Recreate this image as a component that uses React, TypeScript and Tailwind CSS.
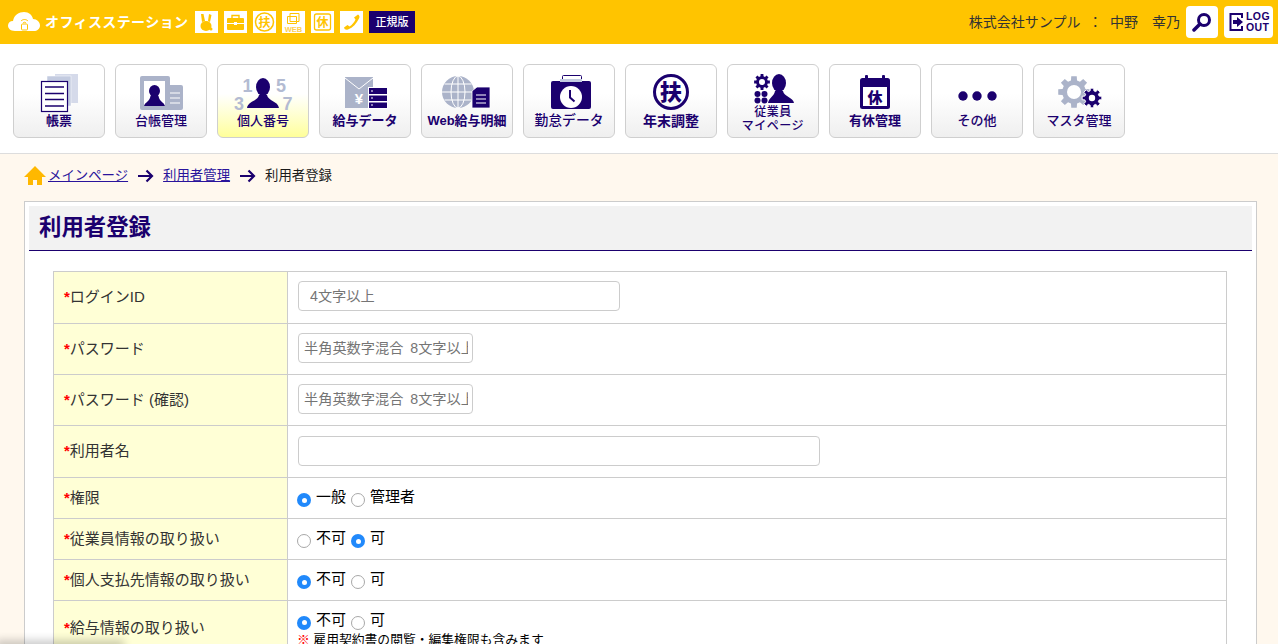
import type { ReactNode } from 'react';

const NAVY = '#1b006e';
const GREY = '#abb3c9';
const YELLOW = '#ffc400';

// 歯車: 歯の数から輪郭を作る
function gearPath(cx: number, cy: number, r: number, teeth: number) {
  const inner = r * 0.74;
  const step = (Math.PI * 2) / teeth;
  const pts: string[] = [];
  for (let i = 0; i < teeth; i++) {
    const a = i * step;
    const w = step * 0.22;
    const add = (rad: number, ang: number) =>
      pts.push(`${(cx + rad * Math.cos(ang)).toFixed(2)} ${(cy + rad * Math.sin(ang)).toFixed(2)}`);
    add(inner, a - w * 1.5);
    add(r, a - w);
    add(r, a + w);
    add(inner, a + w * 1.5);
  }
  return `M${pts.join('L')}Z`;
}

function Person({ cx, cy, rx, ry, left, right, bottom }: { cx: number; cy: number; rx: number; ry: number; left: number; right: number; bottom: number }) {
  const neck = cy + ry - 1;
  return (
    <g fill={NAVY}>
      <ellipse cx={cx} cy={cy} rx={rx} ry={ry} />
      <path d={`M${left} ${bottom}C${left + 1} ${neck + 6} ${cx - 5} ${neck + 6} ${cx - 4} ${neck}L${cx + 4} ${neck}C${cx + 5} ${neck + 6} ${right - 1} ${neck + 6} ${right} ${bottom}Z`} />
    </g>
  );
}

/* ヘッダーの小アイコン */
const quick: ReactNode[] = [
  <>
    <ellipse cx="11" cy="15" rx="5.5" ry="5" fill={YELLOW} />
    <path d="M7 11L6 3l2.5 0L10 10ZM13 10l1-7 2.5 1L15 11Z" fill={YELLOW} />
    <circle cx="16" cy="18" r="1.5" fill={YELLOW} />
  </>,
  <>
    <rect x="3" y="7" width="17" height="12" rx="1" fill={YELLOW} />
    <path d="M8 7V4.5h7V7" fill="none" stroke={YELLOW} strokeWidth="1.4" />
    <path d="M3 12.5h17" stroke="#fff" strokeWidth="1" />
    <rect x="10" y="11" width="3" height="3" fill="#fff" />
  </>,
  <>
    <circle cx="11.5" cy="11" r="9" fill="none" stroke={YELLOW} strokeWidth="1.5" />
    <text x="11.5" y="15.5" textAnchor="middle" fontSize="12" fontWeight="700" fill={YELLOW}>扶</text>
  </>,
  <>
    <path d="M8 2.500h9v8H8ZM5.500 5.500h9v7h-9Z" fill="#fff" stroke={YELLOW} strokeWidth="1" />
    <text x="11.5" y="21" textAnchor="middle" fontSize="7.5" fontWeight="700" fill="#ffd04d">WEB</text>
  </>,
  <>
    <rect x="3.5" y="3" width="16" height="16" rx="2" fill="none" stroke={YELLOW} strokeWidth="1.3" />
    <text x="11.5" y="15.5" textAnchor="middle" fontSize="12" fontWeight="700" fill={YELLOW}>休</text>
  </>,
  <path d="M18 3.5c1.5 1 2 2 1 4-2.5 5-6 9-11 11-2 .7-3.500 0-4-2l3.500-2.500 2 1.500c2.500-1.500 4.500-4 6-7l-1.500-2Z" fill={YELLOW} />,
];

/* 上段メニュー: 座標はタイル内側の左上基準 */
const tiles: { label: ReactNode; cls: string; active?: boolean; icon: ReactNode }[] = [
  {
    label: '帳票',
    cls: 'text-[13px] font-bold',
    icon: (
      <>
        <rect x="41" y="9" width="23" height="29" fill="#d5daea" />
        <rect x="33" y="11" width="24" height="30" fill="#c3cbe0" stroke="#fff" strokeWidth="0.5" />
        <rect x="27.500" y="16.500" width="26" height="30" fill="#fff" stroke={NAVY} strokeWidth="1.200" />
        <path d="M31 22h19M31 28.500h19M31 34.500h19M31 41h19" stroke={NAVY} strokeWidth="1.700" />
      </>
    ),
  },
  {
    label: '台帳管理',
    cls: 'text-[13px] font-medium',
    icon: (
      <>
        <rect x="50" y="20" width="17" height="25" rx="2" fill={GREY} />
        <path d="M54 28h10M54 33h10M54 38h10" stroke="#fff" strokeWidth="1" />
        <rect x="24" y="11" width="30" height="34" rx="2" fill={GREY} />
        <rect x="28" y="16" width="21" height="25" fill="#fff" />
        <Person cx={38.500} cy={26} rx={5.500} ry={6} left={28} right={49} bottom={41} />
      </>
    ),
  },
  {
    label: '個人番号',
    cls: 'text-[13px] font-medium',
    active: true,
    icon: (
      <>
        <g fontSize="18" fontWeight="700" fill="#b3bbd2" textAnchor="middle">
          <text x="29.500" y="27">1</text>
          <text x="63" y="27">5</text>
          <text x="21" y="45">3</text>
          <text x="69.500" y="45">7</text>
        </g>
        <Person cx={45} cy={22} rx={7} ry={9} left={29} right={61} bottom={43} />
      </>
    ),
  },
  {
    label: '給与データ',
    cls: 'text-[13px] font-bold',
    icon: (
      <>
        <rect x="25" y="12" width="28" height="31" fill={GREY} />
        <path d="M25 13l14 11 14-11" fill="none" stroke="#fff" strokeWidth="1" />
        <text x="39" y="39" textAnchor="middle" fontSize="15" fontWeight="700" fill="#fff">¥</text>
        <g fill={NAVY} stroke="#fff" strokeWidth="1">
          <rect x="48.500" y="22.500" width="19" height="7" />
          <rect x="48.500" y="30" width="19" height="6.500" />
          <rect x="48.500" y="37" width="19" height="6.500" />
        </g>
        <path d="M51 26h2M51 33h2M51 40h2" stroke="#fff" strokeWidth="1.200" />
      </>
    ),
  },
  {
    label: 'Web給与明細',
    cls: 'text-[13px] font-bold',
    icon: (
      <>
        <circle cx="36" cy="27" r="16" fill={GREY} />
        <g fill="none" stroke="#fff" strokeWidth="1">
          <ellipse cx="36" cy="27" rx="7" ry="16" />
          <path d="M36 11v32M20 27h32M22.500 19h27M22.500 35h27" />
        </g>
        <path d="M50 26l5-4h13v21H50Z" fill={NAVY} stroke="#fff" strokeWidth="0.800" />
        <path d="M54 30h10M54 34h10M54 38h10" stroke="#fff" strokeWidth="1.200" />
      </>
    ),
  },
  {
    label: '勤怠データ',
    cls: 'text-[13.800px] font-medium',
    icon: (
      <>
        <rect x="38.500" y="10.500" width="19" height="10" rx="1" fill="#fff" stroke={NAVY} />
        <rect x="27" y="16" width="40" height="28" rx="2" fill={NAVY} />
        <rect x="36" y="14" width="22" height="3" fill="#c3cbe0" />
        <circle cx="47" cy="32" r="11" fill="#fff" />
        <path d="M46 25v7.500l4.500 4" fill="none" stroke={NAVY} strokeWidth="2" />
      </>
    ),
  },
  {
    label: '年末調整',
    cls: 'text-[14px] font-bold',
    icon: (
      <>
        <circle cx="45" cy="27" r="16.500" fill="none" stroke={NAVY} strokeWidth="3" />
        <text x="45" y="35" textAnchor="middle" fontSize="22" fontWeight="900" fill={NAVY}>扶</text>
      </>
    ),
  },
  {
    label: (
      <span className="block -mt-[8px] text-[12px] leading-[14px] tracking-[0.5px]">
        従業員
        <br />
        マイページ
      </span>
    ),
    cls: 'font-medium',
    icon: (
      <>
        <path d={gearPath(34, 17, 8, 8)} fill={NAVY} />
        <circle cx="34" cy="17" r="3" fill="#fff" />
        <g fill={NAVY}>
          <circle cx="29.500" cy="29" r="3" />
          <circle cx="36.500" cy="29" r="3" />
          <circle cx="29.500" cy="35.500" r="3" />
          <circle cx="36.500" cy="35.500" r="3" />
        </g>
        <Person cx={51} cy={18} rx={7} ry={9} left={40} right={66} bottom={38} />
      </>
    ),
  },
  {
    label: '有休管理',
    cls: 'text-[13px] font-bold',
    icon: (
      <>
        <rect x="30" y="13" width="30" height="31" rx="2.500" fill={NAVY} />
        <rect x="33" y="22" width="24" height="19" fill="#fff" />
        <rect x="35" y="10" width="3" height="5" rx="1" fill={NAVY} />
        <rect x="52" y="10" width="3" height="5" rx="1" fill={NAVY} />
        <text x="45" y="38" textAnchor="middle" fontSize="15" fontWeight="900" fill={NAVY}>休</text>
      </>
    ),
  },
  {
    label: 'その他',
    cls: 'text-[13px] font-medium',
    icon: (
      <g fill={NAVY}>
        <circle cx="31" cy="31" r="4.700" />
        <circle cx="45" cy="31" r="4.700" />
        <circle cx="60" cy="31" r="4.700" />
      </g>
    ),
  },
  {
    label: 'マスタ管理',
    cls: 'text-[13px] font-medium',
    icon: (
      <>
        <path d={gearPath(40, 27, 16, 8)} fill={GREY} />
        <circle cx="40" cy="27" r="7" fill="#fff" />
        <path d={gearPath(58, 33, 10, 8)} fill={NAVY} stroke="#fff" strokeWidth="1" />
        <circle cx="58" cy="33" r="3.200" fill="#fff" />
      </>
    ),
  },
];

function Tile({ label, cls, active, icon }: (typeof tiles)[number]) {
  return (
    <div
      className={`w-[92px] h-[74px] rounded-md border border-[#cfcfcf] text-[#1b006e] text-center ${
        active ? 'bg-gradient-to-b from-white from-40% to-[#ffff99]' : 'bg-gradient-to-b from-white from-40% to-[#efefef]'
      }`}
    >
      <svg width="90" height="48" viewBox="0 0 90 48" className="block">
        {icon}
      </svg>
      <div className={`leading-[16px] ${cls}`}>{label}</div>
    </div>
  );
}

function Radio({ on }: { on?: boolean }) {
  return (
    <span
      className={`inline-flex items-center justify-center w-[14px] h-[14px] rounded-full relative top-[6px] ${
        on ? 'bg-[#2189fb]' : 'bg-white border border-[#a8a8a8]'
      }`}
    >
      {on && <span className="w-[5px] h-[5px] rounded-full bg-white" />}
    </span>
  );
}

function Radios({ items }: { items: [string, boolean][] }) {
  return (
    <div className="flex gap-[5px] -ml-[1px] -mt-[2px] text-[15px] leading-[20px] text-black">
      {items.map(([t, on]) => (
        <label key={t} className="flex gap-[5px]">
          <Radio on={on} />
          <span>{t}</span>
        </label>
      ))}
    </div>
  );
}

function Row({ label, h, children }: { label: string; h: string; children: ReactNode }) {
  return (
    <tr className={h}>
      <th className="bg-[#ffffd6] border border-[#cccccc] pl-[10px] text-left font-normal text-[15px] text-[#333]">
        <span className="text-[#f00] font-bold">*</span>
        {label}
      </th>
      <td className="border border-[#cccccc] pl-[10px] align-middle">{children}</td>
    </tr>
  );
}

const inputCls = 'block h-[30px] border border-[#cccccc] rounded-[4px] text-[14.200px] [word-spacing:3px] bg-white outline-none placeholder:text-[#757575]';

export default function App() {
  return (
    <div className="relative h-[644px] overflow-hidden bg-[#fff8ee] text-[#333] font-['Liberation_Sans','Noto_Sans_CJK_JP',sans-serif]">
      {/* ヘッダー */}
      <header className="h-[44px] bg-[#ffc400] flex items-center justify-between pl-[8px] pr-[5px]">
        <div className="flex items-center">
          <svg width="33" height="22" viewBox="0 0 33 22" className="mr-[4px]">
            <path d="M7 20C2 20 0 17 0 14.500 0 12 2 10 5 10 6 4 11 1 16 1c5 0 8 3 9 7 4 0 7 3 7 6.500C32 18 29 20 26 20Z" fill="#fff" />
            <path d="M13 10c2-2 5-2 7 0M15 12c1-1 2-1 3 0" fill="none" stroke={YELLOW} strokeWidth="1" />
            <rect x="13.500" y="13" width="6" height="6" rx="1" fill="none" stroke={YELLOW} strokeWidth="1" />
          </svg>
          <span className="w-[147px] text-white font-bold text-[14px] tracking-[0.4px] whitespace-nowrap">オフィスステーション</span>
          <div className="flex gap-[6px] ml-[3px]">
            {quick.map((q, i) => (
              <svg key={i} width="23" height="22" viewBox="0 0 23 22" className="bg-white block">
                {q}
              </svg>
            ))}
          </div>
          <span className="ml-[6px] w-[46px] h-[22px] flex items-center justify-center bg-[#1b006e] text-white text-[11px] font-medium">正規版</span>
        </div>
        <div className="flex items-center">
          <span className="text-[14px] text-[#333] mr-[6px] whitespace-pre">株式会社サンプル  ：  中野　幸乃</span>
          <div className="w-[32px] h-[32px] bg-white rounded-[4px] flex items-center justify-center">
            <svg width="20" height="20" viewBox="0 0 20 20" fill="none" stroke={NAVY}>
              <circle cx="12" cy="8" r="5.500" strokeWidth="3" />
              <path d="M8 12l-6 6" strokeWidth="3.500" strokeLinecap="round" />
            </svg>
          </div>
          <div className="ml-[6px] w-[49px] h-[32px] bg-white rounded-[4px] flex items-center pl-[5px] gap-[2px]">
            <svg width="15" height="20" viewBox="0 0 15 20" fill="none">
              <path d="M13 6V2H1.500v16H13v-4" stroke={NAVY} strokeWidth="2" />
              <path d="M4 8h4V5l6 5-6 5v-3H4Z" fill={NAVY} />
            </svg>
            <span className="text-[10.500px] leading-[11px] font-bold text-[#1b006e] tracking-[0.4px]">
              LOG
              <br />
              OUT
            </span>
          </div>
        </div>
      </header>

      {/* 上段メニュー */}
      <nav className="h-[110px] bg-white border-b border-[#dddddd] pt-[20px] pl-[13px] flex gap-[10px]">
        {tiles.map((t, i) => (
          <Tile key={i} {...t} />
        ))}
      </nav>

      {/* パンくず */}
      <div className="h-[47px] pl-[24px] pb-[3px] flex items-center text-[13.400px]">
        <svg width="22" height="19" viewBox="0 0 22 19" className="mr-[2px] mb-[2px]">
          <path d="M11 0L22 11H18V19H13V14H9V19H4V11H0Z" fill="#ffb800" />
        </svg>
        <a className="text-[#2a149c] underline">メインページ</a>
        <Arrow />
        <a className="text-[#2a149c] underline">利用者管理</a>
        <Arrow />
        <span className="text-[#1a1a1a]">利用者登録</span>
      </div>

      {/* 本体 */}
      <main className="ml-[24px] w-[1233px] bg-white border border-[#cccccc] p-[4px]">
        <h1 className="h-[45px] bg-[#f2f2f2] border-b border-[#1b006e] pl-[10px] flex items-center text-[22.400px] font-bold text-[#1b006e]">利用者登録</h1>
        <table className="mt-[20px] ml-[24px] w-[1174px] table-fixed border-collapse">
          <colgroup>
            <col className="w-[234px]" />
            <col />
          </colgroup>
          <tbody>
            <Row label="ログインID" h="h-[52px]">
              <input className={`${inputCls} -mt-[4px] w-[322px] pl-[11px]`} placeholder="4文字以上" />
            </Row>
            <Row label="パスワード" h="h-[51px]">
              <input className={`${inputCls} -mt-[2px] w-[175px] pl-[5px] pr-[4px]`} placeholder="半角英数字混合 8文字以上" />
            </Row>
            <Row label="パスワード (確認)" h="h-[51px]">
              <input className={`${inputCls} -mt-[2px] w-[175px] pl-[5px] pr-[4px]`} placeholder="半角英数字混合 8文字以上" />
            </Row>
            <Row label="利用者名" h="h-[52px]">
              <input className={`${inputCls} -mt-[2px] w-[522px]`} />
            </Row>
            <Row label="権限" h="h-[41px]">
              <Radios items={[['一般', true], ['管理者', false]]} />
            </Row>
            <Row label="従業員情報の取り扱い" h="h-[41px]">
              <Radios items={[['不可', false], ['可', true]]} />
            </Row>
            <Row label="個人支払先情報の取り扱い" h="h-[41px]">
              <Radios items={[['不可', true], ['可', false]]} />
            </Row>
            <Row label="給与情報の取り扱い" h="h-[56px]">
              <Radios items={[['不可', true], ['可', false]]} />
              <p className="-ml-[1px] mt-[2px] -mb-[2px] text-[12.800px] leading-[16px] text-black">
                <span className="text-[#f00]">※</span> 雇用契約書の閲覧・編集権限も含みます
              </p>
            </Row>
          </tbody>
        </table>
      </main>

      {/* 左下の薄い影 */}
      <div className="absolute left-0 -bottom-[5px] w-[120px] h-[5px] bg-black/20 shadow-[0_0_8px_4px_rgba(0,0,0,0.2)]" />
    </div>
  );
}

function Arrow() {
  return (
    <svg width="16" height="14" viewBox="0 0 16 14" fill="none" stroke={NAVY} strokeWidth="2.200" className="mx-[9.500px]">
      <path d="M0 7h14M8.500 1.500L14 7l-5.500 5.500" />
    </svg>
  );
}
